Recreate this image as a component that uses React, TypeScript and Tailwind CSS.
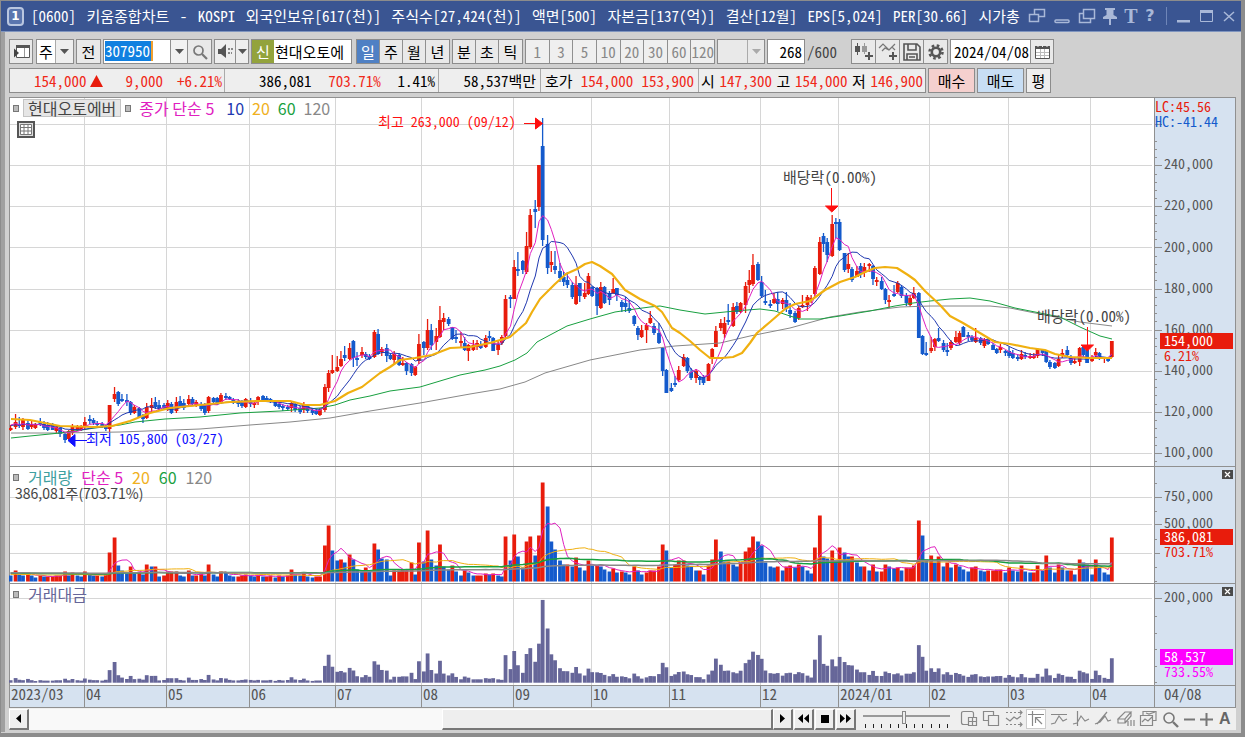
import React from 'react';

// One entry per trading day: direction, high, body top, body bottom, low (plot units)
const CANDLES = `
u 425 428 429 431;u 414 422 427 429;d 417 424 426 428;u 418 420 427 430;d 419 423 429 430;u 421 424 427 429;u 423 425 428 429;d 418 422 424 426;
d 421 424 428 430;d 422 425 430 431;d 423 425 430 430;u 425 427 431 433;d 426 428 434 437;d 433 434 440 443;u 430 431 439 440;u 424 426 433 435;
u 425 426 430 431;u 425 427 430 431;u 417 422 427 430;d 415 419 421 424;d 418 420 423 425;d 421 423 425 427;d 422 424 426 428;d 425 426 429 431;
u 405 405 429 432;u 387 394 399 402;d 391 392 404 406;d 394 399 401 402;d 394 400 401 406;d 401 402 413 415;u 405 407 413 414;d 407 408 417 418;
d 414 416 419 423;u 403 407 418 419;u 398 405 408 412;d 397 402 407 409;d 400 405 408 410;d 403 405 408 410;u 400 403 409 411;d 402 404 413 414;
u 397 402 411 413;d 396 401 406 408;d 399 403 408 410;u 395 399 404 407;d 397 399 404 405;u 400 402 405 407;d 402 404 409 411;d 403 405 413 415;
u 396 397 411 413;d 397 398 402 404;d 397 398 403 405;u 393 395 402 404;d 393 396 398 400;d 396 397 399 400;d 398 400 403 404;d 399 401 404 407;
d 400 402 406 408;u 398 399 407 408;d 398 401 404 407;u 401 403 405 408;u 396 397 402 405;d 395 396 400 402;d 396 398 401 402;d 398 399 402 403;
d 400 401 406 407;d 403 404 407 409;d 404 406 408 411;d 405 407 409 411;u 402 403 408 412;d 402 404 410 412;d 406 408 412 414;u 402 404 410 413;
d 405 406 411 413;d 408 410 413 415;d 409 411 414 415;u 408 410 415 416;u 384 387 410 412;u 370 373 388 392;u 355 370 373 374;u 356 367 371 372;
u 351 359 366 367;d 346 355 358 361;u 343 348 359 360;d 340 341 358 367;d 352 358 359 366;u 347 352 355 358;d 352 354 357 359;d 354 356 359 360;
u 330 332 357 358;d 329 334 354 355;u 347 349 352 356;d 344 348 356 362;d 353 355 359 360;u 351 354 360 365;d 353 355 365 366;u 357 363 365 366;
d 362 363 371 375;d 363 364 373 376;u 366 367 375 376;u 334 344 361 364;d 341 342 348 355;u 319 330 348 350;d 324 330 345 350;u 328 336 342 350;
u 306 320 337 338;u 313 318 322 330;d 317 319 324 326;d 327 327 339 340;d 330 337 339 343;u 332 341 343 348;d 337 343 350 351;u 344 345 351 361;
u 340 345 350 351;u 340 343 347 350;d 341 345 348 349;u 335 338 347 348;d 331 336 338 341;d 337 338 351 351;u 341 345 350 355;u 335 337 343 345;
u 295 299 336 338;d 295 297 299 308;u 260 267 299 299;d 252 269 270 276;d 260 261 270 274;u 232 246 272 274;u 209 215 247 249;d 200 209 212 228;
u 165 165 207 211;d 118 146 240 246;d 235 244 268 274;u 251 262 265 272;d 251 266 270 274;d 263 271 278 282;d 272 277 282 286;d 272 280 285 288;
d 282 285 297 299;u 276 285 304 305;d 283 283 296 302;u 283 293 297 299;u 273 276 294 295;d 286 287 296 297;d 287 288 306 315;u 282 287 308 309;
d 286 287 303 304;d 291 293 300 305;u 278 289 293 294;d 288 288 295 301;d 300 302 307 312;d 297 303 307 312;d 300 308 311 313;d 315 316 324 326;
d 326 328 335 340;u 325 330 337 338;u 323 325 330 343;u 311 318 323 324;d 323 326 333 335;d 323 333 343 344;d 347 348 371 376;d 369 370 393 393;
d 383 388 391 392;d 376 383 385 387;u 366 370 380 381;u 354 357 366 367;d 357 358 371 373;d 368 372 378 380;u 369 371 378 383;d 376 377 380 385;
d 375 377 383 385;u 363 364 381 381;u 348 349 357 364;u 326 331 347 347;u 319 323 328 331;u 317 323 334 338;d 304 320 322 325;u 303 307 326 327;
d 302 306 312 314;u 302 303 312 313;u 282 286 305 313;u 270 280 285 293;u 254 265 284 286;d 262 264 280 281;d 276 282 296 298;d 290 301 303 305;
d 300 304 306 308;u 293 299 303 304;d 292 299 304 311;u 298 300 304 309;d 292 300 308 312;d 303 310 314 318;d 311 313 322 323;u 306 308 318 320;
u 295 305 307 308;u 295 297 305 311;u 295 298 299 303;u 266 268 294 297;u 237 242 274 275;d 233 236 244 252;d 238 242 255 262;u 215 224 256 257;
d 218 222 224 238;d 219 222 250 251;d 253 253 270 272;u 253 264 269 273;d 267 269 280 282;u 266 271 277 277;d 263 266 274 278;u 263 267 273 277;
u 263 264 266 272;d 265 266 279 285;u 277 280 282 286;d 277 281 289 290;d 288 289 300 304;u 295 300 302 308;d 285 294 296 297;u 281 283 292 293;
d 285 287 296 298;d 293 296 303 306;u 295 298 305 307;u 287 293 298 299;d 292 293 338 338;d 335 336 354 355;d 342 353 355 356;u 337 348 351 353;
u 338 339 347 351;d 328 338 341 342;d 340 343 350 352;d 343 350 352 356;u 340 342 348 350;u 331 337 342 343;u 331 333 343 345;d 326 327 337 337;
d 332 335 337 341;d 335 337 340 342;u 328 338 342 343;d 337 338 343 345;u 338 340 346 348;d 338 340 344 345;d 343 345 350 350;d 348 349 353 354;
u 344 347 350 353;d 350 351 353 356;d 347 351 356 358;d 350 353 358 359;d 354 357 359 361;u 350 354 359 360;d 352 355 357 359;u 353 356 358 359;
u 353 356 358 359;u 348 349 356 358;d 349 350 353 356;d 350 351 362 363;d 360 362 367 369;d 362 363 368 369;u 355 359 366 367;u 349 353 355 358;
d 346 350 355 357;d 355 357 363 365;u 357 361 363 364;u 347 348 362 366;d 345 347 355 358;d 349 350 363 363;u 355 358 361 362;u 348 352 355 357;
d 352 353 359 360;u 357 357 358 363;d 357 359 361 362;u 341 341 357 358`
    .trim()
    .split(';')
    .map(row => {
        const [dir, ...n] = row.trim().split(' ');
        const [high, top, bottom, low] = n.map(Number);
        return { up: dir === 'u', high, top, bottom, low };
    });

const VOLUMES = [
    6, 11, 7, 6, 9, 6, 4, 6, 5, 5, 5, 6, 6, 10, 6, 9, 6, 5, 10, 7, 6, 6, 5, 7, 29, 44, 16, 11, 8, 15, 8, 9, 7, 17, 15, 15, 5, 6, 10, 10,
    10, 6, 5, 11, 6, 6, 8, 6, 17, 7, 5, 10, 9, 6, 5, 5, 6, 7, 6, 5, 6, 5, 5, 6, 4, 6, 5, 6, 12, 7, 6, 9, 5, 4, 5, 5, 36, 56, 31, 21,
    22, 19, 27, 22, 12, 10, 14, 11, 38, 32, 23, 22, 6, 11, 11, 12, 12, 19, 7, 39, 20, 51, 22, 16, 37, 15, 12, 16, 10, 6, 11, 9, 6, 6, 6, 8, 7, 8, 6, 5,
    45, 21, 47, 25, 14, 40, 45, 26, 46, 99, 75, 40, 32, 21, 17, 17, 15, 24, 14, 11, 21, 16, 16, 15, 12, 10, 13, 9, 10, 9, 7, 15, 11, 7, 9, 11, 11, 15, 37, 31,
    14, 17, 21, 21, 16, 15, 11, 11, 7, 16, 22, 42, 30, 20, 20, 17, 15, 19, 30, 34, 45, 40, 36, 19, 15, 14, 15, 11, 15, 16, 14, 17, 15, 11, 8, 34, 66, 25, 23, 31,
    21, 34, 29, 25, 25, 19, 15, 15, 11, 17, 10, 10, 17, 15, 13, 14, 11, 14, 14, 16, 61, 46, 22, 26, 19, 25, 15, 19, 14, 17, 15, 12, 10, 14, 15, 11, 10, 11, 11, 12,
    12, 9, 14, 11, 10, 16, 10, 9, 9, 16, 11, 26, 14, 9, 17, 14, 11, 11, 7, 22, 19, 17, 7, 22, 14, 9, 7, 44,
];

const MA20 = '11,419 30,420 60,426 95,427 112,426 130,421 150,413 170,408 200,405 230,402 260,401 290,401 305,405 320,405 335,401 348,393 362,387 380,373 390,367 400,360 415,358 432,355 450,348 470,347 490,343 510,337 526,323 532,312 540,299 555,284 566,274 577,269 585,264 592,262 600,266 612,274 625,290 640,299 655,306 662,312 672,328 680,333 690,341 700,350 710,358 722,358 733,357 742,353 750,343 757,333 770,322 785,309 795,304 810,301 825,290 840,282 855,277 865,272 875,268 885,267 897,268 908,275 915,280 925,291 940,305 950,316 963,323 980,333 995,342 1010,344 1030,348 1045,350 1055,354 1070,357 1090,358 1112,358';
const MA60 = '11,438 30,436 60,433 95,428 120,425 135,422 165,419 200,417 240,413 280,411 320,408 335,405 350,400 370,396 390,391 420,387 440,381 460,375 485,370 500,366 515,360 527,353 537,342 550,335 567,326 590,319 615,312 635,309 650,307 660,306 680,310 705,314 735,311 760,309 775,311 790,316 800,319 820,319 840,316 870,311 895,306 913,303 930,301 950,299 970,298 990,301 1015,308 1040,313 1060,317 1080,327 1100,336 1112,339';
const MA120 = '11,433 60,433 120,432 200,429 250,425 290,422 330,418 370,411 420,403 470,394 500,389 525,382 545,373 590,360 640,350 675,346 720,343 750,336 790,328 830,317 860,312 900,307 930,306 990,306 1010,308 1040,314 1080,322 1112,326';

const MONTHS = [
    { x: 9, label: '2023/03' },
    { x: 84, label: '04' },
    { x: 166, label: '05' },
    { x: 249, label: '06' },
    { x: 335, label: '07' },
    { x: 421, label: '08' },
    { x: 513, label: '09' },
    { x: 591, label: '10' },
    { x: 669, label: '11' },
    { x: 760, label: '12' },
    { x: 838, label: '2024/01' },
    { x: 929, label: '02' },
    { x: 1008, label: '03' },
    { x: 1090, label: '04' },
];

const RED = '#e81c0c';
const BLUE = '#145acc';
const LEGEND = "font-['Noto_Sans_CJK_KR',sans-serif] text-base";
const priceY = (thousands: number) => 453 - (thousands - 100) * 2.055;
const barX = (i: number) => {
    const group = Math.floor((i - 1) / 3);
    return 13.7 + group * 12.373 + (i - 1 - group * 3) * 3.7;
};
const closes = CANDLES.map(c => (c.up ? c.top : c.bottom));
const values = VOLUMES.map((v, i) => v * (100 + (453 - (CANDLES[i].top + CANDLES[i].bottom) / 2) / 2.055) * 0.00369);

const average = (data: number[], span: number) =>
    data.map((_, i) => {
        let sum = 0;
        for (let k = 0; k < span; k++) sum += i - k >= 0 ? data[i - k] : data[Math.min(k - i, 15)];
        return sum / span;
    });
const toPoints = (data: number[], y: (v: number) => number) => data.map((v, i) => `${(barX(i) + 1.9).toFixed(1)},${y(v).toFixed(1)}`).join(' ');

const Line: React.FC<{ points: string; color: string; width?: number }> = ({ points, color, width = 1 }) => (
    <polyline points={points} fill="none" stroke={color} strokeWidth={width} strokeLinejoin="round" />
);

interface PanelProps {
    top: number;
    height: number;
    label: string;
    rows: number[];
    ticks: number[];
    children: React.ReactNode;
    overlay?: React.ReactNode;
}

const Panel: React.FC<PanelProps> = ({ top, height, label, rows, ticks, children, overlay }) => (
    <section aria-label={label} className="relative">
        <svg viewBox={`9 ${top} 1227 ${height}`} className="block w-full h-auto" fontSize="14">
            <rect x="9" y={top} width="1145" height={height} fill="#fff" />
            <rect x="1154" y={top} width="82" height={height} fill="#d6e2f0" />
            <g stroke="#d6d6d6">
                {MONTHS.slice(1).map(m => <line key={m.x} x1={m.x + 0.5} x2={m.x + 0.5} y1={top} y2={top + height} />)}
                {rows.map(y => <line key={y} x1="9" x2="1152" y1={Math.round(y) + 0.5} y2={Math.round(y) + 0.5} />)}
            </g>
            <g stroke="#909090">
                {ticks.map(y => <line key={y} x1="1154" x2="1157" y1={Math.round(y) + 0.5} y2={Math.round(y) + 0.5} />)}
                {rows.map(y => <line key={y} x1="1154" x2="1162" y1={Math.round(y) + 0.5} y2={Math.round(y) + 0.5} />)}
                <line x1="1154.5" x2="1154.5" y1={top} y2={top + height} />
                <line x1="9.5" x2="9.5" y1={top} y2={top + height} />
                <line x1="1235.5" x2="1235.5" y1={top} y2={top + height} />
                <line x1="9" x2="1236" y1={top + 0.5} y2={top + 0.5} />
            </g>
            {children}
        </svg>
        {overlay}
    </section>
);

const AxisBadge: React.FC<{ y: number; value: string; rate: string; color: string }> = ({ y, value, rate, color }) => (
    <g>
        <rect x="1160" y={y + 16} width="73" height="13" fill="#d6e2f0" />
        <rect x="1160" y={y} width="73" height="16" fill={color} />
        <text x="1164" y={y + 13} fill="#fff">{value}</text>
        <text x="1164" y={y + 28} fill={color}>{rate}</text>
    </g>
);

const CloseButton = () => (
    <button aria-label="지표 닫기" className="absolute right-[3px] top-1 flex h-[9px] w-[11px] items-center justify-center bg-[#4a4a4a]">
        <svg width="7" height="7" viewBox="0 0 7 7" stroke="#fff" strokeWidth="1.2"><path d="M1 1l5 5M6 1L1 6" /></svg>
    </button>
);

const Marker = () => <span className="h-[7px] w-[6px] border border-[#777] bg-[#bbb]" />;

const PriceChart = () => (
    <Panel
        top={97}
        height={369}
        label="가격"
        rows={[260, 240, 220, 200, 180, 160, 140, 120, 100].map(priceY)}
        ticks={Array.from({ length: 40 }, (_, i) => priceY(96 + i * 4))}
        overlay={
            <div className={`absolute left-1 top-[2px] leading-4 ${LEGEND}`}>
                <div className="flex items-center gap-1">
                    <Marker />
                    <span className="h-[18px] border border-[#c4c4c4] bg-[#e6e6e6] px-1 leading-4 text-[#444]">현대오토에버</span>
                    <Marker />
                    <span className="ml-1 leading-4 text-[#e020c0]">종가 단순 5</span>
                    <span className="ml-2 leading-4 text-[#2038b0]">10</span>
                    <span className="ml-1 leading-4 text-[#f0b020]">20</span>
                    <span className="ml-1 leading-4 text-[#18a040]">60</span>
                    <span className="ml-1 leading-4 text-[#888]">120</span>
                </div>
                <button aria-label="데이터 표" className="ml-1 mt-1 flex h-[17px] w-[18px] items-center justify-center border-2 border-[#555] bg-[#ddd]">
                    <svg width="12" height="11" viewBox="0 0 12 11" fill="#fff" stroke="#777"><path d="M.5 .5h11v10h-11zM.5 3.5h11M.5 7h11M4 .5v10M8 .5v10" /></svg>
                </button>
            </div>
        }
    >
        {CANDLES.map((c, i) => (
            <g key={i} fill={c.up ? RED : BLUE}>
                <rect x={barX(i) + 1.2} y={c.high} width="1.3" height={Math.max(1, c.low - c.high)} />
                <rect x={barX(i)} y={c.top} width="3.8" height={Math.max(2, c.bottom - c.top)} />
            </g>
        ))}
        <Line points={MA120} color="#888" />
        <Line points={MA60} color="#18a040" />
        <Line points={toPoints(average(closes, 10), v => v)} color="#2038b0" />
        <Line points={toPoints(average(closes, 5), v => v)} color="#e020c0" />
        <Line points={MA20} color="#f0b010" width={2.2} />
        <g fill="#ff1010" stroke="#ff1010">
            <text x="378" y="127" stroke="none">최고 263,000 (09/12)</text>
            <path d="M524 123.500h12M535.500 118l7 5.500-7 5.500z" />
            <path d="M831.500 188v18M825.500 206h12.500l-6.200 6z" />
            <path d="M1087.500 327v18M1081 345h12.500l-6.200 6z" />
        </g>
        <g fill="#1010ff" stroke="#1010ff">
            <path d="M87 440.500h-12M75 434.500l-7 6 7 6z" />
            <text x="86" y="444" stroke="none">최저 105,800 (03/27)</text>
        </g>
        <g fill="#444" fontSize="15">
            <text x="783" y="183">배당락(0.00%)</text>
            <text x="1037" y="322">배당락(0.00%)</text>
        </g>
        <g fill="#555">
            {[240, 220, 200, 180, 160, 140, 120, 100].map(p => <text key={p} x="1164" y={priceY(p) + 4}>{p},000</text>)}
        </g>
        <text x="1155" y="112" fill={RED}>LC:45.56</text>
        <text x="1155" y="127" fill={BLUE}>HC:-41.44</text>
        <AxisBadge y={333} value="154,000" rate="6.21%" color={RED} />
    </Panel>
);

const VolumeChart = () => (
    <Panel
        top={466}
        height={117}
        label="거래량"
        rows={[497, 524, 553]}
        ticks={[483, 511, 539, 567, 581]}
        overlay={
            <>
                <div className={`absolute left-1 top-[3px] ${LEGEND}`}>
                    <div className="flex items-center gap-[9px] leading-4">
                        <Marker />
                        <span className="text-[#40a0a0]">거래량</span>
                        <span className="text-[#e020c0]">단순 5</span>
                        <span className="text-[#f0b020]">20</span>
                        <span className="text-[#18a040]">60</span>
                        <span className="text-[#888]">120</span>
                    </div>
                    <div className="ml-[2px] text-sm leading-4 text-[#444]">386,081주(703.71%)</div>
                </div>
                <CloseButton />
            </>
        }
    >
        {VOLUMES.map((v, i) => <rect key={i} x={barX(i)} y={581.5 - v} width="3.8" height={v} fill={v >= VOLUMES[i - 1] ? RED : BLUE} />)}
        <Line points={toPoints(average(VOLUMES, 5), v => 581.5 - v)} color="#e020c0" />
        <Line points={toPoints(average(VOLUMES, 20), v => 581.5 - v)} color="#f0b010" />
        <Line points={toPoints(average(VOLUMES, 60), v => 581.5 - v)} color="#18a040" width={1.5} />
        <Line points={toPoints(average(VOLUMES, 120), v => 581.5 - v)} color="#888" width={1.5} />
        <g fill="#555">
            <text x="1164" y="501">750,000</text>
            <text x="1164" y="528">500,000</text>
        </g>
        <AxisBadge y={529} value="386,081" rate="703.71%" color={RED} />
    </Panel>
);

const ValueChart = () => (
    <Panel
        top={583}
        height={102}
        label="거래대금"
        rows={[598]}
        ticks={[616, 633, 649, 666, 682]}
        overlay={
            <>
                <div className={`absolute left-1 top-[3px] flex items-center gap-[9px] ${LEGEND}`}>
                    <Marker />
                    <span className="leading-4 text-[#666699]">거래대금</span>
                </div>
                <CloseButton />
            </>
        }
    >
        {values.map((v, i) => <rect key={i} x={barX(i)} y={682.7 - v} width="3.8" height={v} fill="#666699" />)}
        <text x="1164" y="602" fill="#555">200,000</text>
        <AxisBadge y={649} value="58,537" rate="733.55%" color="#ff00ff" />
    </Panel>
);

const TimeAxis = () => (
    <svg viewBox="9 685 1227 23" className="block h-auto w-full overflow-visible" fontSize="15">
        <rect x="9" y="685" width="1227" height="23" fill="#d6e2f0" />
        <g stroke="#909090">
            {MONTHS.map(m => <line key={m.x} x1={m.x + 0.5} x2={m.x + 0.5} y1="685" y2="708" />)}
            <path d="M1154.500 685v23M1235.500 685v23M9 685.500h1227M9 707.500h1227" fill="none" />
        </g>
        <g fill="#555">
            {MONTHS.map(m => <text key={m.x} x={m.x + 2} y="700">{m.label}</text>)}
            <text x="1164" y="700">04/08</text>
        </g>
    </svg>
);

const TitleBar = () => (
    <header className="flex h-[31px] shrink-0 items-center border-b border-[#7f95bf] bg-[#3a5592] px-[6px] text-white">
        <span className="mr-[7px] flex h-[19px] w-[17px] items-center justify-center rounded border-2 border-[#b9c6e0] bg-[#5a75ae] font-['DejaVu_Sans'] text-xs font-bold">1</span>
        <h1 className="flex flex-1 justify-between whitespace-nowrap">
            {['[0600]', '키움종합차트', '-', 'KOSPI', '외국인보유[617(천)]', '주식수[27,424(천)]', '액면[500]', '자본금[137(억)]', '결산[12월]', 'EPS[5,024]', 'PER[30.66]', '시가총'].map(t => (
                <span key={t}>{t}</span>
            ))}
        </h1>
        <div className="ml-2 flex items-center gap-[6px] text-[#a9b8d8]">
            <button aria-label="창 분리"><svg width="18" height="16" viewBox="0 0 18 16" fill="none" stroke="currentColor" strokeWidth="1.500"><path d="M6.500 7V1.500h10v7H11M1.500 6.500h9v7h-9z" /></svg></button>
            <button aria-label="숨기기" className="ml-px"><svg width="18" height="16" viewBox="0 0 18 16" fill="none" stroke="currentColor" strokeWidth="1.500"><rect x="2" y="12" width="14" height="2.500" rx="1" /></svg></button>
            <button aria-label="창 복제" className="ml-px"><svg width="18" height="16" viewBox="0 0 18 16" fill="none" stroke="currentColor" strokeWidth="1.500"><path d="M5.500 1.500h11v9h-11zM5 5.500H1.500v9h11V11" /></svg></button>
            <button aria-label="고정"><svg width="16" height="17" viewBox="0 0 16 17" fill="currentColor"><path d="M3 0h10v2h-1.500v5l3.500 2v2H9v6H7v-6H1V9l3.500-2V2H3z" /></svg></button>
            <button aria-label="글자" className="w-[14px] font-['Liberation_Serif'] text-xl font-bold leading-5">T</button>
            <button aria-label="도움말" className="w-3 font-['DejaVu_Sans'] text-base font-bold leading-5">?</button>
            <span className="ml-1 h-[18px] w-px bg-[#6f86b8]" />
            <button aria-label="최소화" className="ml-1"><svg width="13" height="16" viewBox="0 0 13 16" fill="currentColor"><path d="M0 12h13v2.500H0z" /></svg></button>
            <button aria-label="최대화" className="ml-1"><svg width="13" height="16" viewBox="0 0 13 16" fill="none" stroke="currentColor"><path d="M.5 3.500h12v10H.5z" /><path d="M0 3.500h13" strokeWidth="3" /></svg></button>
            <button aria-label="닫기" className="ml-1"><svg width="12" height="16" viewBox="0 0 12 16" stroke="currentColor" strokeWidth="1.500"><path d="M1 4l10 9M11 4L1 13" /></svg></button>
        </div>
    </header>
);

const BTN = 'flex h-full items-center justify-center border-r border-[#909090] last:border-r-0';

const Group: React.FC<{ children: React.ReactNode; className?: string }> = ({ children, className = '' }) => (
    <div className={`flex h-[25px] shrink-0 border border-[#8c8c8c] ${className}`}>{children}</div>
);

const Arrow: React.FC<{ muted?: boolean }> = ({ muted }) => (
    <svg width="9" height="5" viewBox="0 0 9 5" fill={muted ? '#aaa' : '#555'}><path d="M0 0h9L4.500 5z" /></svg>
);

const Toolbar = () => (
    <div className="flex items-center gap-[2px] text-black">
        <Group className="bg-[#e9e9e9]">
            <button aria-label="목록 열기" className={`${BTN} w-[22px]`}>
                <svg width="17" height="17" viewBox="0 0 17 17"><path d="M3.500 2.500h13v12h-13z" fill="#fff" stroke="#555" /><path d="M3 2h14v3H3z" fill="#555" /><path d="M11.500 5v9" stroke="#999" /><path d="M1 5.500v9l5-4.500z" fill="#444" /></svg>
            </button>
        </Group>
        <Group className="relative ml-px w-[38px] bg-white">
            <select aria-label="종목 구분" className="w-full appearance-none bg-transparent pl-[2px] leading-5"><option>주</option></select>
            <span className="pointer-events-none absolute inset-y-0 right-0 flex w-[18px] items-center justify-center border-l border-[#aaa] bg-[#eee]"><Arrow /></span>
        </Group>
        <Group className="bg-[#e9e9e9]"><button className={`${BTN} w-[23px]`}>전</button></Group>
        <Group className="bg-white">
            <div className="w-[66px] py-px pl-px">
                <input aria-label="종목코드" defaultValue="307950" className="h-5 w-[48px] border-r-2 border-[#f0a030] bg-[#1080e0] text-white outline-none" />
            </div>
            <button aria-label="최근 종목" className={`${BTN} w-[18px] border-l bg-[#f2f2f2]`}><Arrow /></button>
            <button aria-label="종목 검색" className={`${BTN} w-[23px] bg-[#e9e9e9]`}>
                <svg width="16" height="16" viewBox="0 0 16 16" fill="none" stroke="#777"><circle cx="6.500" cy="6.500" r="4.500" strokeWidth="1.700" /><path d="M10 10l5 5" strokeWidth="2.200" /></svg>
            </button>
        </Group>
        <Group className="bg-[#eee]">
            <button aria-label="음성" className={`${BTN} w-[21px]`}>
                <svg width="17" height="15" viewBox="0 0 17 15" fill="#555"><path d="M1 5h3l5-5v14L4 10H1z" /><path d="M11 4h2v2h-2zM14 4h2v2h-2zM11 8h2v2h-2zM14 8h1v2h-1z" fill="#888" /></svg>
            </button>
            <button aria-label="음성 설정" className={`${BTN} w-3`}><Arrow /></button>
        </Group>
        <Group className="w-[101px] bg-white">
            <span className="flex w-[22px] shrink-0 items-center justify-center bg-[#93a33c] text-white">신</span>
            <span className="flex items-center pl-px">현대오토에</span>
        </Group>
        <Group className="ml-[2px] bg-[#e9e9e9]">
            <button className={`${BTN} w-[23px] bg-[#4f80c4] text-white`}>일</button>
            <button className={`${BTN} w-[23px]`}>주</button>
            <button className={`${BTN} w-[23px]`}>월</button>
            <button className={`${BTN} w-[23px]`}>년</button>
        </Group>
        <Group className="bg-[#e9e9e9]">
            <button className={`${BTN} w-[23px]`}>분</button>
            <button className={`${BTN} w-[23px]`}>초</button>
            <button className={`${BTN} w-[23px]`}>틱</button>
        </Group>
        <Group className="w-[190px] bg-[#efefef] text-[#888]">
            {[1, 3, 5, 10, 20, 30, 60, 120].map(n => <button key={n} className={`${BTN} flex-1 basis-0`}>{n}</button>)}
        </Group>
        <Group className="relative w-12 bg-[#e9e9e9]">
            <select aria-label="사용자 주기" disabled className="w-full appearance-none"><option></option></select>
            <span className="pointer-events-none absolute inset-y-0 right-0 flex w-[17px] items-center justify-center border-l border-[#aaa]"><Arrow muted /></span>
        </Group>
        <Group className="bg-white"><input aria-label="조회 개수" defaultValue="268" className="w-9 pr-[2px] text-right outline-none" /></Group>
        <span className="w-[42px] text-[#444]">/600</span>
        <Group className="bg-[#e9e9e9]">
            <button aria-label="차트 추가" className={`${BTN} w-6`}>
                <svg width="19" height="19" viewBox="0 0 19 19" fill="#555"><path d="M1 4h5v6H1zM3 1h1v12H3z" /><path d="M8 4h5v6H8zM10 1h1v11h-1z" fill="#999" /><path d="M14 10h2v3h3v2h-3v3h-2v-3h-3v-2h3z" /></svg>
            </button>
            <button aria-label="지표 추가" className={`${BTN} w-6`}>
                <svg width="19" height="19" viewBox="0 0 19 19" fill="none" stroke="#777"><path d="M1 6l4-4 6 6 6-6M4 9l3-3 4 2 3-3 3 3" strokeWidth="1.200" /><path d="M14 10h2v3h3v2h-3v3h-2v-3h-3v-2h3z" fill="#555" stroke="none" /></svg>
            </button>
            <button aria-label="저장" className={`${BTN} w-6`}>
                <svg width="18" height="18" viewBox="0 0 18 18" fill="none" stroke="#555" strokeWidth="1.600"><path d="M1 1h13l3 3v13H1zM5 1v6h8V1M4 17v-6h10v6M6 14h6" /></svg>
            </button>
            <button aria-label="설정" className={`${BTN} w-[23px]`}>
                <svg width="16" height="16" viewBox="0 0 16 16" fill="none" stroke="#555"><circle cx="8" cy="8" r="4.200" strokeWidth="2.600" /><circle cx="8" cy="8" r="6.500" strokeWidth="2.500" strokeDasharray="2.600 2.500" /></svg>
            </button>
        </Group>
        <Group className="bg-white">
            <input aria-label="기준일" defaultValue="2024/04/08" className="w-[79px] pl-[3px] outline-none" />
            <button aria-label="달력" className={`${BTN} w-[23px] border-l bg-[#e9e9e9]`}>
                <svg width="15" height="14" viewBox="0 0 15 14"><path d="M.5 1.500h14v12H.5z" fill="#fff" stroke="#555" /><path d="M0 1h15v3H0z" fill="#555" /><path d="M3 0v2M7.500 0v2M12 0v2" stroke="#eee" /><path d="M1 7.500h13M1 10.500h13M5.500 4v9M9.500 4v9" stroke="#bbb" /></svg>
            </button>
        </Group>
    </div>
);

const QuoteBar = () => (
    <div className="mt-[4px] flex items-center gap-[2px] text-black">
        <div className="flex h-[25px] w-[917px] border border-[#8c8c8c] bg-[#eee]">
            <div className="flex w-[215px] items-center justify-end gap-[22px] border-r border-[#aaa] pr-[2px] text-[#f02818]">
                <span className="flex items-center gap-1">154,000 <svg width="13" height="12" viewBox="0 0 13 12" fill={RED}><path d="M6.500 0L13 12H0z" /></svg></span>
                <span>9,000</span>
                <span className="-ml-2">+6.21%</span>
            </div>
            <div className="flex w-[214px] items-center justify-between border-r border-[#aaa] pl-[34px] pr-[3px]">
                <span>386,081</span><span className="text-[#f02818]">703.71%</span><span>1.41%</span>
            </div>
            <div className="flex w-[102px] items-center justify-end border-r border-[#aaa] pr-1">58,537백만</div>
            <div className="flex w-[158px] items-center justify-between border-r border-[#aaa] px-1">
                <span>호가</span><span className="text-[#f02818]">154,000</span><span className="text-[#f02818]">153,900</span>
            </div>
            <div className="flex flex-1 items-center justify-between px-[2px]">
                <span>시</span><span className="text-[#f02818]">147,300</span>
                <span>고</span><span className="text-[#f02818]">154,000</span>
                <span>저</span><span className="text-[#f02818]">146,900</span>
            </div>
        </div>
        <button className="h-[25px] w-[47px] border border-[#8c8c8c] bg-[#f5d0ce]">매수</button>
        <button className="h-[25px] w-[47px] border border-[#8c8c8c] bg-[#c8def4]">매도</button>
        <button className="h-[25px] w-[25px] border border-[#8c8c8c] bg-[#eee]">평</button>
    </div>
);

const RAISED = 'flex h-[21px] w-5 shrink-0 items-center justify-center border border-b-2 border-r-2 border-white border-b-[#777] border-r-[#777] bg-[#eee]';

const TOOLS = [
    { name: '새 창', d: 'M8 14.500H3.500q-2 0-2-2v-9q0-2 2-2h8q2 0 2 2V7M8.500 7.500h8v8h-8zM12.500 8v8M8.500 11.500h8' },
    { name: '겹쳐 보기', d: 'M6 10.500H1.500v-9h10V5M6.500 5.500h10v10h-10z' },
    { name: '추세 구간', d: 'M1 2.500h2M5 2.500h2M9 2.500h2M13 2.500h4M15 .5l2 2-2 2M1 14.500h2M5 14.500h2M9 14.500h2M13 14.500h4M15 12.500l2 2-2 2M1 8l4 3 4-4 3 2 4-3' },
    { name: '십자선', d: 'M1 4.500h16M5.500 1v15M8 7.500h6M8.500 7v6M9 8l6 6' },
    { name: '수평선', d: 'M1 4.500h16M1 14l4-1 4-7 4 5 4-2' },
    { name: '수직선', d: 'M5.500 1v15M1 14l4-1 4-7 4 5 4-2' },
    { name: '추세선', d: 'M3 14L13 2M1 14l5-2 5-6 3 5 3-1' },
    { name: '전체 지우기', d: 'M1 9l7-7h6l-6 7zM1 9v4h7V9M8 13l6-7V2M11 16v-5M14 16v-6M17 16v-6' },
    { name: '이미지 저장', d: 'M4 5V1.500h13v9h-3M1.500 5.500h12v10h-12zM3 12l3-3 3 2 4-4M7 3l3 1 6-2' },
];

const BottomBar = () => (
    <footer className="flex h-[22px] items-center bg-[#efefef]">
        <div className="flex min-w-0 flex-1">
            <button aria-label="왼쪽" className={RAISED}><svg width="5" height="9" viewBox="0 0 5 9"><path d="M5 0v9L0 4.500z" /></svg></button>
            <div className="flex flex-1 justify-end bg-[#f9f9f9]">
                <div className="h-[21px] w-4/9 border border-b-2 border-r-2 border-white border-b-[#777] border-r-[#777] bg-[#eee]" />
            </div>
            <button aria-label="오른쪽" className={RAISED}><svg width="5" height="9" viewBox="0 0 5 9"><path d="M0 0v9l5-4.500z" /></svg></button>
            <button aria-label="뒤로" className={`${RAISED} ml-px`}><svg width="11" height="9" viewBox="0 0 11 9"><path d="M5 0v9L0 4.500zM11 0v9L6 4.500z" /></svg></button>
            <button aria-label="정지" className={`${RAISED} ml-px`}><span className="h-2 w-2 bg-black" /></button>
            <button aria-label="앞으로" className={`${RAISED} ml-px`}><svg width="11" height="9" viewBox="0 0 11 9"><path d="M0 0v9l5-4.500zM6 0v9l5-4.500z" /></svg></button>
        </div>
        <div className="ml-[7px] w-[87px]">
            <input type="range" aria-label="재생 속도" defaultValue="47" className="block h-[14px] w-full appearance-none bg-[linear-gradient(#999,#999)] bg-[length:100%_2px] bg-[position:0_5px] bg-no-repeat [&::-webkit-slider-thumb]:h-[13px] [&::-webkit-slider-thumb]:w-1 [&::-webkit-slider-thumb]:appearance-none [&::-webkit-slider-thumb]:border [&::-webkit-slider-thumb]:border-[#888] [&::-webkit-slider-thumb]:bg-[#eee]" />
            <div className="flex justify-between px-[2px]">
                {Array.from({ length: 11 }, (_, i) => <span key={i} className="h-1 w-px bg-[#222]" />)}
            </div>
        </div>
        <div className="ml-[10px] mr-1 flex w-[272px] items-center justify-between">
            {TOOLS.map((t, i) => (
                <button key={t.name} aria-label={t.name} className={i === 3 ? 'bg-white outline outline-[#ccc]' : ''}>
                    <svg width="18" height="18" viewBox="0 0 18 18" fill="none" stroke="#888" strokeWidth="1.200"><path d={t.d} /></svg>
                </button>
            ))}
            <button aria-label="돋보기"><svg width="17" height="17" viewBox="0 0 17 17" fill="none" stroke="#777"><circle cx="7" cy="7" r="5" strokeWidth="1.600" /><path d="M11 11l5 5" strokeWidth="2.400" /></svg></button>
            <button aria-label="축소"><svg width="13" height="13" viewBox="0 0 13 13"><path d="M1 6.500h11" stroke="#777" strokeWidth="2" /></svg></button>
            <button aria-label="확대"><svg width="13" height="13" viewBox="0 0 13 13"><path d="M0 6.500h13M6.500 0v13" stroke="#777" strokeWidth="2" /></svg></button>
            <button aria-label="자동 맞춤" className="w-[14px] font-['Liberation_Sans'] text-base font-bold text-[#666]">A</button>
        </div>
    </footer>
);

const App: React.FC = () => (
    <div className="flex min-h-screen flex-col whitespace-nowrap border border-b-4 border-r-4 border-[#8c8c8c] bg-[#d0d0d0] font-['Noto_Sans_Mono_CJK_KR','Noto_Sans_CJK_KR',sans-serif] text-[15px] leading-5">
        <TitleBar />
        <main className="border-l-4 border-[#a0a0a0] pb-[2px] pl-1 pr-[5px] pt-[7px]">
            <Toolbar />
            <QuoteBar />
            <div className="mt-1">
                <PriceChart />
                <VolumeChart />
                <ValueChart />
                <TimeAxis />
            </div>
            <BottomBar />
        </main>
    </div>
);

export default App;
